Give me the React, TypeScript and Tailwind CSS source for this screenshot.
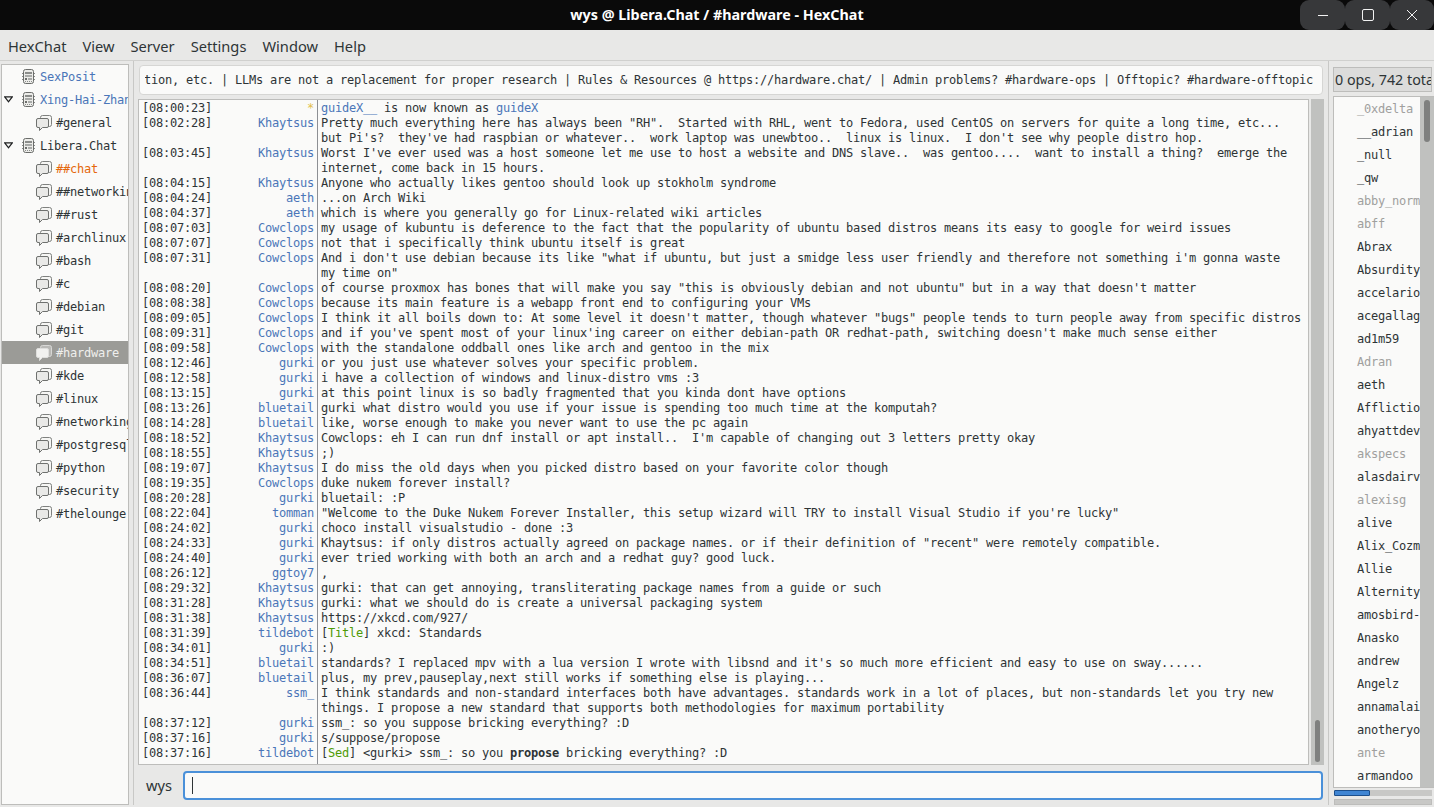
import type { ReactNode } from "react";

const MONO = "font-['DejaVu_Sans_Mono',monospace] text-[12px] tracking-[-0.2246px]";

const channels = [
  { name: "SexPosit", kind: "server", color: "text-[#4a76b8]", noArrow: true },
  { name: "Xing-Hai-Zhang", kind: "server", color: "text-[#4a76b8]" },
  { name: "#general", kind: "channel" },
  { name: "Libera.Chat", kind: "server" },
  { name: "##chat", kind: "channel", color: "text-[#e5670c]" },
  { name: "##networking", kind: "channel" },
  { name: "##rust", kind: "channel" },
  { name: "#archlinux", kind: "channel" },
  { name: "#bash", kind: "channel" },
  { name: "#c", kind: "channel" },
  { name: "#debian", kind: "channel" },
  { name: "#git", kind: "channel" },
  { name: "#hardware", kind: "channel", selected: true },
  { name: "#kde", kind: "channel" },
  { name: "#linux", kind: "channel" },
  { name: "#networking", kind: "channel" },
  { name: "#postgresql", kind: "channel" },
  { name: "#python", kind: "channel" },
  { name: "#security", kind: "channel" },
  { name: "#thelounge", kind: "channel" },
];

const Green = ({ children }: { children: ReactNode }) => (
  <span className="text-[#4e9a06]">{children}</span>
);

const messages: [string, string, ReactNode][] = [
  [
    "[08:00:23]",
    "*",
    <>
      <span className="text-[#4a76b8]">guideX__</span> is now known as{" "}
      <span className="text-[#4a76b8]">guideX</span>
    </>,
  ],
  ["[08:02:28]", "Khaytsus", 'Pretty much everything here has always been "RH".  Started with RHL, went to Fedora, used CentOS on servers for quite a long time, etc...'],
  ["", "", "but Pi's?  they've had raspbian or whatever..  work laptop was unewbtoo..  linux is linux.  I don't see why people distro hop."],
  ["[08:03:45]", "Khaytsus", "Worst I've ever used was a host someone let me use to host a website and DNS slave..  was gentoo....  want to install a thing?  emerge the"],
  ["", "", "internet, come back in 15 hours."],
  ["[08:04:15]", "Khaytsus", "Anyone who actually likes gentoo should look up stokholm syndrome"],
  ["[08:04:24]", "aeth", "...on Arch Wiki"],
  ["[08:04:37]", "aeth", "which is where you generally go for Linux-related wiki articles"],
  ["[08:07:03]", "Cowclops", "my usage of kubuntu is deference to the fact that the popularity of ubuntu based distros means its easy to google for weird issues"],
  ["[08:07:07]", "Cowclops", "not that i specifically think ubuntu itself is great"],
  ["[08:07:31]", "Cowclops", 'And i don\'t use debian because its like "what if ubuntu, but just a smidge less user friendly and therefore not something i\'m gonna waste'],
  ["", "", 'my time on"'],
  ["[08:08:20]", "Cowclops", 'of course proxmox has bones that will make you say "this is obviously debian and not ubuntu" but in a way that doesn\'t matter'],
  ["[08:08:38]", "Cowclops", "because its main feature is a webapp front end to configuring your VMs"],
  ["[08:09:05]", "Cowclops", 'I think it all boils down to: At some level it doesn\'t matter, though whatever "bugs" people tends to turn people away from specific distros'],
  ["[08:09:31]", "Cowclops", "and if you've spent most of your linux'ing career on either debian-path OR redhat-path, switching doesn't make much sense either"],
  ["[08:09:58]", "Cowclops", "with the standalone oddball ones like arch and gentoo in the mix"],
  ["[08:12:46]", "gurki", "or you just use whatever solves your specific problem."],
  ["[08:12:58]", "gurki", "i have a collection of windows and linux-distro vms :3"],
  ["[08:13:15]", "gurki", "at this point linux is so badly fragmented that you kinda dont have options"],
  ["[08:13:26]", "bluetail", "gurki what distro would you use if your issue is spending too much time at the komputah?"],
  ["[08:14:28]", "bluetail", "like, worse enough to make you never want to use the pc again"],
  ["[08:18:52]", "Khaytsus", "Cowclops: eh I can run dnf install or apt install..  I'm capable of changing out 3 letters pretty okay"],
  ["[08:18:55]", "Khaytsus", ";)"],
  ["[08:19:07]", "Khaytsus", "I do miss the old days when you picked distro based on your favorite color though"],
  ["[08:19:35]", "Cowclops", "duke nukem forever install?"],
  ["[08:20:28]", "gurki", "bluetail: :P"],
  ["[08:22:04]", "tomman", '"Welcome to the Duke Nukem Forever Installer, this setup wizard will TRY to install Visual Studio if you\'re lucky"'],
  ["[08:24:02]", "gurki", "choco install visualstudio - done :3"],
  ["[08:24:33]", "gurki", 'Khaytsus: if only distros actually agreed on package names. or if their definition of "recent" were remotely compatible.'],
  ["[08:24:40]", "gurki", "ever tried working with both an arch and a redhat guy? good luck."],
  ["[08:26:12]", "ggtoy7", ","],
  ["[08:29:32]", "Khaytsus", "gurki: that can get annoying, transliterating package names from a guide or such"],
  ["[08:31:28]", "Khaytsus", "gurki: what we should do is create a universal packaging system"],
  ["[08:31:38]", "Khaytsus", "https://xkcd.com/927/"],
  ["[08:31:39]", "tildebot", <>[<Green>Title</Green>] xkcd: Standards</>],
  ["[08:34:01]", "gurki", ":)"],
  ["[08:34:51]", "bluetail", "standards? I replaced mpv with a lua version I wrote with libsnd and it's so much more efficient and easy to use on sway......"],
  ["[08:36:07]", "bluetail", "plus, my prev,pauseplay,next still works if something else is playing..."],
  ["[08:36:44]", "ssm_", "I think standards and non-standard interfaces both have advantages. standards work in a lot of places, but non-standards let you try new"],
  ["", "", "things. I propose a new standard that supports both methodologies for maximum portability"],
  ["[08:37:12]", "gurki", "ssm_: so you suppose bricking everything? :D"],
  ["[08:37:16]", "gurki", "s/suppose/propose"],
  [
    "[08:37:16]",
    "tildebot",
    <>
      [<Green>Sed</Green>] &lt;gurki&gt; ssm_: so you <b className="font-bold">propose</b> bricking everything? :D
    </>,
  ],
];

const users: [string, boolean?][] = [
  ["_0xdelta", true],
  ["__adrian"],
  ["_null"],
  ["_qw"],
  ["abby_normal", true],
  ["abff", true],
  ["Abrax"],
  ["Absurdity"],
  ["accelarion"],
  ["acegallagher"],
  ["ad1m59"],
  ["Adran", true],
  ["aeth"],
  ["Affliction"],
  ["ahyattdev"],
  ["akspecs", true],
  ["alasdairv"],
  ["alexisg", true],
  ["alive"],
  ["Alix_Cozmo"],
  ["Allie"],
  ["Alternity"],
  ["amosbird-"],
  ["Anasko"],
  ["andrew"],
  ["Angelz"],
  ["annamalai"],
  ["anotheryou"],
  ["ante", true],
  ["armandoo"],
];

const ServerIcon = () => (
  <svg width="13" height="15" viewBox="0 0 13 15" fill="none" className="shrink-0">
    <path d="M0 4.5h1M0 7.5h1M0 10.5h1M12 4.5h1M12 7.5h1M12 10.5h1" stroke="#8b8d8b" />
    <rect x="1.5" y="0.5" width="10" height="14" rx="2" fill="#ecece9" stroke="#6a6c6a" />
    <rect x="3" y="3" width="7" height="2" fill="#8b8d8b" />
    <rect x="3" y="6" width="7" height="2" fill="#a8aaa8" />
    <rect x="3" y="9" width="2" height="2" fill="#6a6c6a" />
    <rect x="6" y="9" width="4" height="2" fill="#a8aaa8" />
    <path d="M3 12.5h7" stroke="#8b8d8b" strokeDasharray="1 1" />
  </svg>
);

const ChannelIcon = ({ light }: { light?: boolean }) => (
  <svg width="16" height="16" viewBox="0 0 16 16" fill="none" className="shrink-0">
    <path
      d="M4.5 2.5a2 2 0 0 1 2-2h7a2 2 0 0 1 2 2v7a2 2 0 0 1-2 2h-3z"
      stroke={light ? "#d8d8d6" : "#7f817f"}
      fill={light ? "#b9b9b6" : "#f6f6f4"}
    />
    <path
      d="M2 3.5h9a1.5 1.5 0 0 1 1.5 1.5v6a1.5 1.5 0 0 1-1.5 1.5H6.5l-3 3v-3H2A1.5 1.5 0 0 1 .5 11V5A1.5 1.5 0 0 1 2 3.5z"
      stroke={light ? "#dededc" : "#6f716f"}
      fill={light ? "#f1f1ef" : "#e9e9e7"}
    />
  </svg>
);

const Arrow = () => (
  <svg width="9" height="7" viewBox="0 0 9 7" className="shrink-0">
    <path d="M0.7 0.8h7.6L4.5 5.8z" fill="#f4f4f2" stroke="#1f2122" strokeWidth="1.3" />
  </svg>
);

const App = () => {
  return (
    <div className="flex h-screen w-full flex-col overflow-hidden bg-[#e8e8e7] font-['Noto_Sans',sans-serif] text-[#2e3436]">
      {/* title bar */}
      <header className="grid h-[30px] shrink-0 grid-cols-[1fr_auto_1fr] items-center bg-[#0a0a0a]">
        <div />
        <div className="text-[14.33px] font-bold text-white">wys @ Libera.Chat / #hardware - HexChat</div>
        <div className="flex h-full justify-end">
          <button className="flex h-full w-[45px] items-center justify-center rounded-[9px] bg-[#37383a]">
            <svg width="12" height="12" viewBox="0 0 12 12" stroke="#f2f2f2" fill="none">
              <path d="M1 6.5h10" />
            </svg>
          </button>
          <button className="flex h-full w-[45px] items-center justify-center rounded-[9px] bg-[#37383a]">
            <svg width="12" height="12" viewBox="0 0 12 12" stroke="#f2f2f2" fill="none">
              <rect x="0.5" y="0.5" width="11" height="11" rx="1.5" />
            </svg>
          </button>
          <button className="flex h-full w-[44px] items-center justify-center rounded-[9px] bg-[#37383a]">
            <svg width="12" height="12" viewBox="0 0 12 12" stroke="#f2f2f2" fill="none">
              <path d="M1 1l10 10M11 1L1 11" />
            </svg>
          </button>
        </div>
      </header>

      {/* menu bar */}
      <nav className="flex h-[31px] shrink-0 items-center gap-[16px] border-b border-[#d0d0ce] px-[8px] pt-[1px] text-[14.67px]">
        {["HexChat", "View", "Server", "Settings", "Window", "Help"].map((m) => (
          <span key={m}>{m}</span>
        ))}
      </nav>

      <div className="flex min-h-0 flex-1">
        {/* channel tree */}
        <aside className="mb-[2px] ml-[1px] mt-[3px] w-[128px] shrink-0 overflow-hidden border border-[#bdbdbb] bg-[#fafaf9]">
          {channels.map((c) => (
            <div
              key={c.name}
              className={`flex h-[23px] items-center whitespace-pre ${MONO} ${c.selected ? "bg-[#9b9b97] text-[#efefed]" : c.color || ""}`}
            >
              {c.kind === "server" ? (
                <div className="flex items-center pl-[2px]">
                  <div className="flex w-[18px] items-center">{!c.noArrow && <Arrow />}</div>
                  <ServerIcon />
                  <span className="ml-[5px]">{c.name}</span>
                </div>
              ) : (
                <div className="flex items-center pl-[34px]">
                  <ChannelIcon light={c.selected} />
                  <span className="ml-[4px]">{c.name}</span>
                </div>
              )}
            </div>
          ))}
        </aside>

        <div className="ml-[4px] mb-[2px] w-px shrink-0 bg-[#c8c8c6]" />

        {/* center column */}
        <main className="ml-[4px] flex min-w-0 flex-1 flex-col">
          <div className="ml-px mr-[1px] mt-[4px] h-[30px] shrink-0 rounded-[4px] border border-[#d6d6d4] bg-[#fafaf9] pl-[5px] pr-[9px]">
            <div className="flex h-full items-center justify-end overflow-hidden whitespace-pre">
              <span className={`${MONO} shrink-0`}>
                Rules for discussion, moderation, etc. | LLMs are not a replacement for proper research | Rules &amp; Resources @ https://hardware.chat/ | Admin problems? #hardware-ops | Offtopic? #hardware-offtopic
              </span>
            </div>
          </div>

          <div className="mt-[4px] flex min-h-0 flex-1 gap-[2px]">
            <div className={`flex min-w-0 flex-1 flex-col overflow-hidden border border-[#bdbdbb] bg-[#fafaf9] ${MONO}`}>
              <div className="flex h-px shrink-0">
                <div className="w-[178px] shrink-0" />
                <div className="flex-1 border-l border-[#8d8f94]" />
              </div>
              {messages.map(([time, nick, text], i) => (
                <div key={i} className="flex h-[15px] shrink-0 leading-[15px]">
                  <div className="flex w-[178px] shrink-0 justify-between pl-[3px] pr-[3px]">
                    <span>{time}</span>
                    <span className={nick === "*" ? "text-[#e2c04c]" : "text-[#4a76b8]"}>{nick}</span>
                  </div>
                  <div className="flex-1 whitespace-pre border-l border-[#8d8f94] pl-[3px]">{text}</div>
                </div>
              ))}
              <div className="flex min-h-0 flex-1">
                <div className="w-[178px] shrink-0" />
                <div className="flex-1 border-l border-[#8d8f94]" />
              </div>
            </div>
            <div className="flex w-[13px] shrink-0 flex-col justify-end bg-[#c0c1bf] px-[4px] pb-[3px]">
              <div className="h-[42px] rounded-full bg-[#7f807f]" />
            </div>
          </div>

          <div className="flex h-[42px] shrink-0 items-center pb-[2px]">
            <span className="ml-[8px] w-[37px] text-[14.67px]">wys</span>
            <div className="mr-[1px] flex h-[29px] flex-1 items-center rounded-[4px] border-2 border-[#4a90d9] bg-[#fafaf9] pl-[7px]">
              <div className="h-[17px] w-px bg-[#2e3436]" />
            </div>
          </div>
        </main>

        <div className="ml-[4px] mr-[4px] mb-[2px] w-px shrink-0 bg-[#c8c8c6]" />

        {/* user list */}
        <aside className="flex w-[101px] shrink-0 flex-col pb-[2px]">
          <div className="mr-[2px] mt-[6px] flex h-[25px] shrink-0 items-center overflow-hidden whitespace-pre border border-[#bdbdbb] bg-[#dcdcdb] pl-[1px] text-[14.3px]">
            0 ops, 742 total
          </div>
          <div className="mt-[4px] flex min-h-0 flex-1 border-y border-l border-[#bdbdbb] bg-[#fafaf9]">
            <div className={`min-w-0 flex-1 overflow-hidden whitespace-pre pl-[23px] ${MONO}`}>
              {users.map(([u, away]) => (
                <div key={u} className={`flex h-[23px] items-center ${away ? "text-[#a0a09e]" : ""}`}>
                  {u}
                </div>
              ))}
            </div>
            <div className="w-[14px] shrink-0 bg-[#c0c1bf] pl-[4px] pr-[4px] pt-[3px]">
              <div className="h-[42px] rounded-full bg-[#7f807f]" />
            </div>
          </div>
          <div className="ml-px mr-[2px] mt-[2px] h-[6px] shrink-0 bg-[#c8c8c6]">
            <div className="h-full w-[36px] rounded-[1px] border border-[#1c4f8c] bg-[#3f85d3]" />
          </div>
          <div className="ml-px mr-[2px] mt-[3px] h-[6px] shrink-0 border border-[#bdbdbb] bg-[#c8c8c6]" />
        </aside>
      </div>
    </div>
  );
};

export default App;
